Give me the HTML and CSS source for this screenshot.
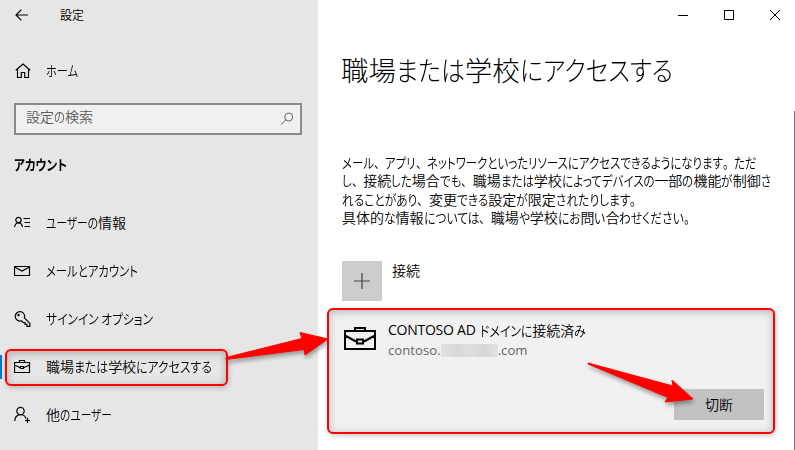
FILE: index.html
```html
<!DOCTYPE html>
<html lang="ja">
<head>
<meta charset="utf-8">
<title>設定</title>
<link rel="stylesheet" href="styles.css">
</head>
<body>
<div class="window">
  <aside class="sidebar">
    <header class="titlebar">
      <svg class="back" width="14" height="12" viewBox="0 0 14 12"><path d="M13 6H1M6.3 .7L1 6l5.300 5.300"/></svg>
      <span class="app-name">設定</span>
    </header>
    <a class="item home">
      <svg width="18" height="16" viewBox="0 0 18 16"><path d="M1.800 7.300L9 1l7.200 6.300M3.500 6v8.500h3.800V9.500h3.400v5h3.800V6"/></svg>
      <span data-width="32">ホーム</span>
    </a>
    <div class="search">
      <span data-width="67">設定の検索</span>
      <svg width="14" height="14" viewBox="0 0 14 14"><circle cx="8.700" cy="5" r="4"/><path d="M5.800 7.900L1 12.700"/></svg>
    </div>
    <h2><span data-width="53">アカウント</span></h2>
    <nav>
      <a class="item">
        <svg width="18" height="16" viewBox="0 0 18 16"><circle cx="4.500" cy="5" r="2.700"/><path d="M.7 12C.7 6.500 8.300 6.500 8.300 12M9.500 3.500h6.500M10.500 7.500h5.500M10.500 11.500h5.500"/></svg>
        <span data-width="80">ユーザーの情報</span>
      </a>
      <a class="item">
        <svg width="18" height="16" viewBox="0 0 18 16"><path d="M.5 3.500h15v9H.5zM.5 4l7.500 4 7.500-4"/></svg>
        <span data-width="92">メールとアカウント</span>
      </a>
      <a class="item">
        <svg width="18" height="18" viewBox="0 0 18 18"><path d="M10.400 7.800a4.700 4.700 0 1 0-3 3l1.700 1.700h1.900v1.900h1.900v2h3v-3z"/><circle cx="4.500" cy="5" r=".7"/></svg>
        <span data-width="107">サインイン オプション</span>
      </a>
      <a class="item selected">
        <svg width="18" height="16" viewBox="0 0 18 16"><path d="M.5 3.500h15v10H.5zM5.500 3.500v-2h5v2M.5 6l5.800 2.700M15.500 6l-5.800 2.700M6.500 7.500h3v2h-3z"/></svg>
        <span data-width="166">職場または学校にアクセスする</span>
      </a>
      <a class="item">
        <svg width="18" height="18" viewBox="0 0 18 18"><circle cx="6.500" cy="5" r="3.700"/><path d="M.8 15c.3-8 10-8 11.200-2.500M13.500 12v5M11 14.500h5"/></svg>
        <span data-width="66">他のユーザー</span>
      </a>
    </nav>
  </aside>
  <main>
    <div class="controls">
      <svg width="10" height="10" viewBox="0 0 10 10"><path d="M0 5.500h10"/></svg>
      <svg width="10" height="10" viewBox="0 0 10 10"><path d="M.5 .5h9v9h-9z"/></svg>
      <svg width="10" height="10" viewBox="0 0 10 10"><path d="M0 0l10 10M10 0L0 10"/></svg>
    </div>
    <h1><span data-width="332">職場または学校にアクセスする</span></h1>
    <div class="description">
      <div data-width="415">メール、アプリ、ネットワークといったリソースにアクセスできるようになります。ただ</div>
      <div data-width="429">し、接続した場合でも、職場または学校によってデバイスの一部の機能が制御さ</div>
      <div data-width="300">れることがあり、変更できる設定が限定されたりします。</div>
      <div data-width="354">具体的な情報については、職場や学校にお問い合わせください。</div>
    </div>
    <div class="connect">
      <div class="plus"><svg width="16" height="16" viewBox="0 0 16 16"><path d="M8 0v16M0 8h16"/></svg></div>
      <span>接続</span>
    </div>
    <section class="account">
      <svg class="briefcase" width="34" height="26" viewBox="0 0 34 26"><path d="M2 5h30v18H2zM12 5V2h10v3M2 9.500l11 6M32 9.500l-11 6M14 13.500h6v4h-6z"/></svg>
      <div class="details">
        <div class="domain"><span class="latin">CONTOSO AD</span><span data-width="106">ドメインに接続済み</span></div>
        <div class="address"><span>contoso.</span><i class="redacted"></i><span>.com</span></div>
      </div>
      <button>切断</button>
    </section>
  </main>
  <div class="callout"></div>
  <svg class="arrows" width="795" height="450" viewBox="0 0 795 450">
    <path d="M226 357.500L302 338.500 300 332.500 328 339 305 355 304 349.500 226 359.500z"/>
    <path d="M588 363L673 386 672 380 693 399 665 402 668 397.500 588 364z"/>
  </svg>
</div>
<script src="kana.js"></script>
</body>
</html>
```
FILE: styles.css
```css
* { box-sizing: border-box; }
body {
  margin: 0;
  font: 350 14px/18px "Noto Sans CJK JP", sans-serif;
  font-feature-settings: "palt";
  color: #000;
}
svg { display: block; flex: none; fill: none; stroke: #000; stroke-width: 1.2; }
.window {
  position: relative;
  display: grid;
  grid-template-columns: 318px 1fr;
  width: 795px;
  height: 450px;
  overflow: hidden;
  background: #fff;
}
.sidebar { background: #e6e6e6; }
.titlebar { display: flex; align-items: center; height: 30px; padding-left: 15px; }
.app-name { margin-left: 31px; font-size: 12px; }
.item { display: flex; align-items: center; height: 48px; padding-left: 14px; white-space: nowrap; }
.item > svg { width: 18px; margin-right: 14px; }
.item > span { padding-bottom: 2px; }
.home { margin-top: 17px; }
.search {
  display: flex;
  align-items: center;
  justify-content: space-between;
  width: 288px;
  height: 32px;
  margin: 8px 0 0 14px;
  padding: 0 6px 3px 10px;
  border: 2px solid #8a8a8a;
  background: #f0f0f0;
  color: #5c5c5c;
}
.search span { padding-bottom: 1px; }
.search svg { stroke: #666; stroke-width: 1; margin-top: 3px; }
h2 { height: 18px; margin: 20px 0 26px 14px; font-size: 14px; line-height: 18px; font-weight: 700; }
.selected { border-left: 2px solid #0078d7; padding-left: 12px; height: 24px; margin: 12px 0; }
main { padding-left: 24px; background: linear-gradient(#777, #777) right 111px / 1px 339px no-repeat; }
.controls { display: flex; justify-content: flex-end; align-items: center; gap: 36px; height: 30px; padding-right: 15px; }
.controls svg { stroke-width: 1; }
h1 { height: 40px; margin: 19px 0 0 -1px; font-size: 27.500px; line-height: 40px; font-weight: 300; white-space: nowrap; }
.description { height: 74px; margin-top: 64px; line-height: 18.300px; white-space: nowrap; }
.connect { display: flex; gap: 10px; height: 40px; margin-top: 34px; }
.plus { display: grid; place-items: center; width: 40px; height: 40px; background: #ccc; }
.plus svg { stroke: #444; }
.account {
  display: grid;
  grid-template-columns: 44px 1fr;
  grid-template-rows: 67px 31px;
  width: 448px;
  height: 126px;
  margin: 7px 0 0 -15px;
  padding: 12px 9px 0 14px;
  border: 2px solid #f00;
  border-radius: 6px;
  background: #f1f1f1;
  box-shadow: inset 0 2px 8px rgba(0,0,0,.24), 1px 2px 5px rgba(0,0,0,.22);
}
.briefcase { margin-top: 4px; stroke-width: 2; }
.details { margin-top: -2px; }
.domain, .address { display: flex; align-items: center; height: 20px; white-space: nowrap; margin-left: 1px; }
.latin, .address { font-family: "Open Sans", sans-serif; font-weight: 400; }
.latin { width: 92px; font-size: 14px; letter-spacing: -.25px; }
.address { font-size: 13.200px; color: #666; }
.redacted { width: 57px; height: 13px; background: linear-gradient(90deg, #e2e2e2, #d8d8d8, #dedede, #d6d6d6, #e2e2e2); }
button {
  grid-column: 2;
  justify-self: end;
  width: 90px;
  height: 31px;
  border: 0;
  padding: 0 0 2px;
  background: #c2c2c2;
  font: inherit;
  color: #000;
}
.callout {
  position: absolute;
  left: 5px;
  top: 349px;
  width: 223px;
  height: 37px;
  border: 2px solid #f00;
  border-radius: 6px;
  box-shadow: inset 0 2px 8px rgba(0,0,0,.26), 1px 2px 5px rgba(0,0,0,.2);
}
.arrows { position: absolute; left: 0; top: 0; filter: drop-shadow(1px 3px 2px rgba(0,0,0,.35)); }
.arrows path { fill: #f00; stroke: #f00; stroke-width: 1; stroke-linejoin: round; }
.kana { display: inline-block; vertical-align: baseline; }
.kana > span { display: inline-block; transform-origin: left; white-space: pre; }
.punctuation { font-feature-settings: normal; }
```
FILE: kana.js
```js
// Narrow the kana of each label so that the line takes its data-width; kanji keep full width.
document.querySelectorAll("[data-width]").forEach(el => {
  const parts = el.textContent.match(/[、。]|[\u3003-\u30ff ]+|[^\u3000-\u30ff ]+/g);
  el.textContent = "";
  const kana = [];
  let fixed = 0, flexible = 0;
  const row = document.createElement("span");
  el.append(row);
  parts.forEach(text => {
    const outer = document.createElement("span");
    if (/[\u3000-\u30ff]/.test(text)) {
      outer.className = /[、。]/.test(text) ? "kana punctuation" : "kana";
      const inner = document.createElement("span");
      inner.textContent = text;
      outer.append(inner);
      row.append(outer);
      const width = inner.getBoundingClientRect().width;
      flexible += width;
      kana.push([outer, inner, width]);
    } else {
      outer.textContent = text;
      row.append(outer);
      fixed += outer.getBoundingClientRect().width;
    }
  });
  const k = (Number(el.dataset.width) - fixed) / flexible;
  kana.forEach(([outer, inner, width]) => {
    outer.style.width = width * k + "px";
    inner.style.transform = `scaleX(${k})`;
  });
});
```
